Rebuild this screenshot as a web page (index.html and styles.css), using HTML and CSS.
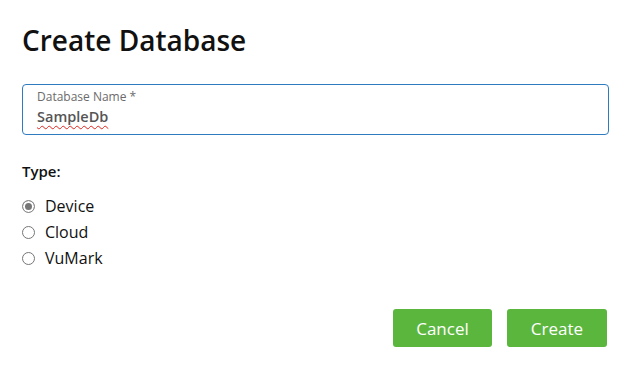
FILE: index.html
```html
<!DOCTYPE html>
<html lang="en">
<head>
    <meta charset="UTF-8">
    <meta name="viewport" content="width=device-width, initial-scale=1.0">
    <title>Create Database</title>
    <link rel="stylesheet" href="styles.css">
</head>
<body>
    <div class="dialog">
        <h1>Create Database</h1>

        <!-- Database name field -->
        <div class="field">
            <label for="db-name">Database Name *</label>
            <input type="text" id="db-name" name="dbName" value="SampleDb" spellcheck="false">
            <span class="field-value">SampleDb</span>
        </div>

        <!-- Database type -->
        <div class="type-group">
            <div class="type-label">Type:</div>
            <label class="radio"><input type="radio" name="dbType" value="device" checked> Device</label>
            <label class="radio"><input type="radio" name="dbType" value="cloud"> Cloud</label>
            <label class="radio"><input type="radio" name="dbType" value="vumark"> VuMark</label>
        </div>

        <div class="actions">
            <button type="button">Cancel</button>
            <button type="submit">Create</button>
        </div>
    </div>
</body>
</html>
```

FILE: styles.css
```css
  body {
      font-family: 'Open Sans', sans-serif;
      margin: 0;
      padding: 0;
      background: #ffffff;
      color: #1a1a1a;
  }

  .dialog {
      padding: 22px 28px 0 22px;
  }

  h1 {
      font-size: 28px;
      font-weight: 600;
      line-height: 36px;
      margin: 0 0 26px 0;
      color: #111;
  }

  .field {
      position: relative;
      height: 49px;
      border: 1px solid #2f7bc0;
      border-radius: 4px;
      margin-right: -2px;
      padding: 0 14px;
  }

  .field label {
      display: block;
      font-size: 12px;
      line-height: 16px;
      color: #6b6b6b;
      padding-top: 4px;
  }

  .field input {
      position: absolute;
      left: 0;
      top: 0;
      width: 100%;
      height: 100%;
      opacity: 0;
      border: none;
  }

  .field-value {
      display: inline-block;
      font-size: 14.5px;
      font-weight: 600;
      line-height: 22px;
      color: #555;
      text-decoration: underline wavy #e0261f;
      text-decoration-thickness: 1px;
      text-underline-offset: 3px;
  }

  .type-group {
      margin-top: 25px;
  }

  .type-label {
      font-size: 15px;
      font-weight: 600;
      line-height: 22px;
      margin-bottom: 11px;
      color: #111;
  }

  .radio {
      display: flex;
      align-items: center;
      font-size: 16px;
      line-height: 26px;
      color: #111;
  }

  .radio input {
      appearance: none;
      width: 13px;
      height: 13px;
      margin: 0 10px 0 0;
      border: 1px solid #767676;
      border-radius: 50%;
      background: #fff;
  }

  .radio input:checked {
      border-color: #8a8a8a;
      box-shadow: inset 0 0 0 2px #fff;
      background: #777;
  }

  .actions {
      display: flex;
      justify-content: flex-end;
      gap: 15px;
      margin-top: 38px;
  }

  button {
      width: 100px;
      height: 38px;
      background-color: #5bb63e;
      color: #fff;
      border: none;
      border-radius: 3px;
      font-family: 'Open Sans', sans-serif;
      font-size: 17px;
      cursor: pointer;
  }

  button:first-child {
      width: 99px;
  }
```
